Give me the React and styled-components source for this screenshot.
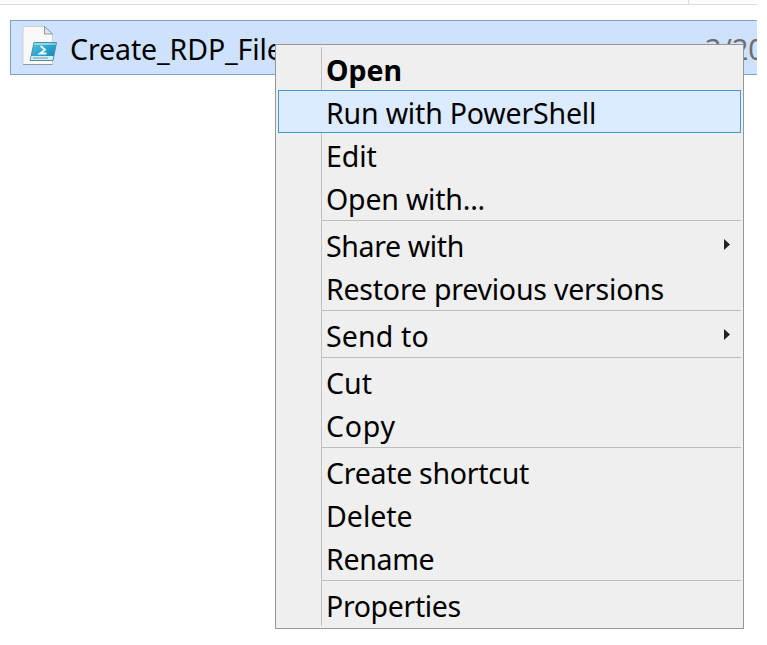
import React from "react";
import styled, { createGlobalStyle } from "styled-components";

const GlobalStyle = createGlobalStyle`
  html, body { margin: 0; background: #fff; }
  *, *::before { box-sizing: border-box; }
  body { font-family: "Noto Sans", "Open Sans", sans-serif; font-size: 28.5px; color: #000; }
`;

const Explorer = styled.main`
  position: relative;
  width: 757px;
  height: 645px;
  overflow: hidden;
  background: #fff;
`;

const ColumnHeader = styled.div`
  display: grid;
  grid-template-columns: 688px 1fr;
  height: 5px;
  background: #fcfcfc;
  border-bottom: 1px solid #dcdcdc;
`;

const HeaderCell = styled.div`
  border-left: ${(p) => (p.$divided ? "1px solid #dedede" : "0")};
`;

const FileRow = styled.div`
  display: flex;
  align-items: flex-start;
  height: 55px;
  margin: 15px 0 0 10px;
  padding-left: 11px;
  border: 1px solid #7da2ce;
  border-color: #869fc4 #7da2ce #7f9fce;
  border-right: 0;
  background: #cfe2fd;
  line-height: 43px;
  white-space: nowrap;
  overflow: hidden;
`;

const FileIcon = styled.svg`
  flex: none;
  width: 36px;
  height: 42px;
  margin-top: 4px;
`;

const FileName = styled.span`
  flex: none;
  width: 635px;
  margin-left: 12px;
  padding-top: 7px;
  letter-spacing: ${(p) => p.$track}px;
`;

const Modified = styled.span`
  padding-top: 7px;
  color: #6d6d6d;
`;

const Menu = styled.div`
  position: absolute;
  left: 275px;
  top: 44px;
  width: 469px;
  padding: 2px;
  border: 1px solid #979797;
  background: #efefef;
`;

const MenuItem = styled.div`
  display: flex;
  align-items: stretch;
  height: 43px;
  line-height: 41px;
  white-space: nowrap;
  border: 1px solid ${(p) => (p.$active ? "#4399c6" : "transparent")};
  border-width: ${(p) => (p.$active ? "1px" : "0")};
  padding: ${(p) => (p.$active ? "0" : "0 1px")};
  background: ${(p) => (p.$active ? "#dcebff" : "transparent")};
`;

const Gutter = styled.span`
  flex: none;
  width: 43px;
  border-right: 1px solid ${(p) => (p.$hidden ? "transparent" : "#c2c2c2")};
`;

const Label = styled.span`
  flex: 1;
  padding: 3px 0 0 4px;
  margin-top: ${(p) => (p.$active ? "-1px" : "0")};
  font-weight: ${(p) => (p.$bold ? 700 : 400)};
  letter-spacing: ${(p) => p.$track}px;
`;

const Arrow = styled.svg`
  flex: none;
  width: 6px;
  height: 12px;
  margin: 15px 10px 0 0;
`;

const Separator = styled.div`
  height: 4px;
  margin-left: 43px;
  border-left: 1px solid #c2c2c2;
  &::before {
    content: "";
    display: block;
    height: 2px;
    border-bottom: 1px solid #bdbdbd;
  }
`;

const groups = [
  [
    { text: "Open", bold: true, track: 0 },
    { text: "Run with PowerShell", active: true, track: -0.18 },
    { text: "Edit", track: -0.1 },
    { text: "Open with...", track: -0.2 },
  ],
  [
    { text: "Share with", submenu: true, track: -0.36 },
    { text: "Restore previous versions", track: -0.22 },
  ],
  [{ text: "Send to", submenu: true, track: 0.15 }],
  [{ text: "Cut", track: 0.1 }, { text: "Copy", track: 0.8 }],
  [
    { text: "Create shortcut", track: -0.28 },
    { text: "Delete", track: 0 },
    { text: "Rename", track: -0.3 },
  ],
  [{ text: "Properties", track: -0.36 }],
];

function ScriptIcon() {
  return (
    <FileIcon viewBox="0 0 36 42" aria-hidden="true">
      <defs>
        <linearGradient id="window" x1="0" y1="0" x2="1" y2="1">
          <stop offset="0" stopColor="#5fc3df" />
          <stop offset="0.5" stopColor="#2aa3cd" />
          <stop offset="1" stopColor="#127fb0" />
        </linearGradient>
        <linearGradient id="shine" x1="0" y1="0" x2="1" y2="0">
          <stop offset="0" stopColor="#8ad9ec" />
          <stop offset="1" stopColor="#c8edf5" stopOpacity="0.5" />
        </linearGradient>
      </defs>
      <path d="M1 1.5H22.5L30.5 9V39.5H1Z" fill="#f9f9f9" stroke="#c9ced4" />
      <path d="M1 39.5H30.5" stroke="#939ba5" />
      <path d="M22.5 1.5V9H30.5Z" fill="#e3e7ea" stroke="#8f979f" />
      <path d="M12 17.5H34.5L31 35.5H8.2Z" fill="url(#window)" stroke="#548ca4" />
      <path d="M12.4 18H34L33.6 20H12Z" fill="url(#shine)" />
      <path d="M9.4 31H31.4L30.6 35H8.7Z" fill="#d8edf3" />
      <path d="M11 33H26" stroke="#71a9bb" strokeWidth="1.2" />
      <path d="M18.7 21L23 24.8L18 28.5H24.5" fill="none" stroke="#f2fcff" strokeWidth="1.8" />
    </FileIcon>
  );
}

export default function App() {
  return (
    <Explorer>
      <GlobalStyle />
      <ColumnHeader>
        <HeaderCell />
        <HeaderCell $divided />
      </ColumnHeader>
      <FileRow>
        <ScriptIcon />
        <FileName $track={-0.1}>Create_RDP_File</FileName>
        <Modified>3/20</Modified>
      </FileRow>
      <Menu role="menu">
        {groups.map((items, index) => (
          <React.Fragment key={items[0].text}>
            {index > 0 && <Separator role="separator" />}
            {items.map((item) => (
              <MenuItem key={item.text} role="menuitem" $active={item.active}>
                <Gutter $hidden={item.active} />
                <Label $bold={item.bold} $active={item.active} $track={item.track}>
                  {item.text}
                </Label>
                {item.submenu && (
                  <Arrow viewBox="0 0 6 12" aria-hidden="true">
                    <path d="M0 1L6 6.5L0 12Z" fill="#222" />
                  </Arrow>
                )}
              </MenuItem>
            ))}
          </React.Fragment>
        ))}
      </Menu>
    </Explorer>
  );
}
